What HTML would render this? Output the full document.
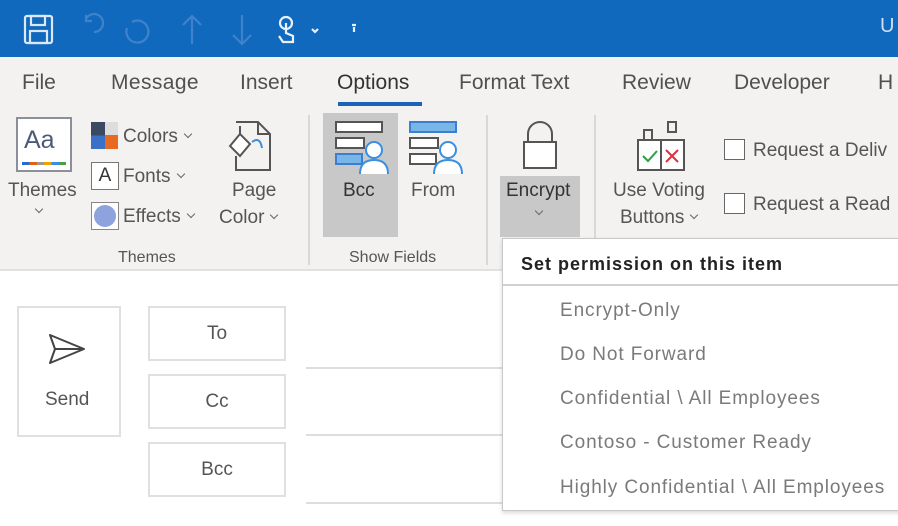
<!DOCTYPE html>
<html><head><meta charset="utf-8"><style>
*{margin:0;padding:0;box-sizing:border-box}
body{width:898px;height:526px;overflow:hidden;background:#fff;font-family:"Liberation Sans",sans-serif;position:relative;color:#444}
.a{position:absolute;white-space:nowrap}
.top{left:0;top:0;width:898px;height:57px;background:#1169bd}
.rib{left:0;top:57px;width:898px;height:214px;background:#f3f2f1;border-bottom:2px solid #e1e1e1}
.tab{font-size:21px;color:#505050;top:71px}
.lbl{font-size:19px;color:#555}
.grp{font-size:16px;color:#555;top:249px}
.sep{width:2px;background:#d8d8d8;top:115px;height:150px}
.box{border:2px solid #e0e0e0;background:#fff;font-size:19px;color:#555;text-align:center}
.item{font-size:19px;color:#7a7a7a;left:560px;letter-spacing:0.9px}
.line{height:2px;background:#ddd;left:306px;width:196px}
.cb{width:21px;height:21px;border:1.5px solid #666;background:#fff}
.ch{display:inline-block;width:6px;height:6px;border-right:1.5px solid #666;border-bottom:1.5px solid #666;transform:rotate(45deg);margin-left:7px;vertical-align:5px}
</style></head><body>
<div class="a top"></div>
<svg class="a" style="left:22px;top:12px" width="340" height="34" viewBox="0 0 340 34" fill="none" stroke-width="2.2">
 <g stroke="#dce8f5"><rect x="3" y="4" width="27" height="27" rx="2"/><rect x="9" y="4" width="14" height="9"/><rect x="8" y="19" width="17" height="12"/></g>
 <g stroke="#3f82cc"><path d="M72 20a9 9 0 1 0-8-13M64 3v6h6"/><path d="M110 10a11 11 0 1 1-5 6"/><path d="M170 32V5M161 13l9-9 9 9"/><path d="M220 3v28M211 23l9 9 9-9"/></g>
 <g stroke="#e8f0fa"><circle cx="264" cy="11" r="6"/><path d="M264 11v10l7 3v6h-10l-4-6"/><path d="M290 17l3 3 3-3"/><path d="M330 13h4M332 15v5"/></g>
</svg>
<div class="a" style="left:880px;top:15px;font-size:20px;color:#cfe0f2">U</div>
<div class="a rib"></div>
<div class="a tab" style="left:22px">File</div>
<div class="a tab" style="left:111px;letter-spacing:0.4px">Message</div>
<div class="a tab" style="left:240px">Insert</div>
<div class="a tab" style="left:337px;color:#333">Options</div>
<div class="a" style="left:338px;top:102px;width:84px;height:4px;background:#1a63b8"></div>
<div class="a tab" style="left:459px">Format Text</div>
<div class="a tab" style="left:622px">Review</div>
<div class="a tab" style="left:734px">Developer</div>
<div class="a tab" style="left:878px">H</div>

<!-- Themes -->
<div class="a" style="left:16px;top:117px;width:56px;height:55px;border:2px solid #8a8f99;background:#fff"></div>
<div class="a" style="left:24px;top:126px;font-size:25px;color:#4c5a75">Aa</div>
<div class="a" style="left:22px;top:162px;width:44px;height:3px;background:linear-gradient(90deg,#2a6ad0 0 17%,#e06020 17% 34%,#999 34% 50%,#f0a000 50% 67%,#3a90e0 67% 84%,#4aa040 84%)"></div>
<div class="a lbl" style="left:8px;top:180px">Themes</div>
<div class="a" style="left:36px;top:204px"><span class="ch" style="margin:0"></span></div>
<div class="a" style="left:91px;top:122px;width:27px;height:27px;background:linear-gradient(#3b4a60 0 50%,#3a70c8 50%);"></div>
<div class="a" style="left:105px;top:122px;width:13px;height:13px;background:#ddd"></div>
<div class="a" style="left:105px;top:135px;width:13px;height:14px;background:#e86a20"></div>
<div class="a lbl" style="left:123px;top:126px">Colors<span class="ch"></span></div>
<div class="a" style="left:91px;top:162px;width:28px;height:28px;border:1.5px solid #777;background:#fff;font-size:19px;text-align:center;color:#333;line-height:25px">A</div>
<div class="a lbl" style="left:123px;top:166px">Fonts<span class="ch"></span></div>
<div class="a" style="left:91px;top:202px;width:28px;height:28px;border:1.5px solid #888;background:#fff"></div>
<div class="a" style="left:94px;top:205px;width:22px;height:22px;border-radius:50%;background:#8ea2de"></div>
<div class="a lbl" style="left:123px;top:206px">Effects<span class="ch"></span></div>
<svg class="a" style="left:228px;top:120px" width="48" height="52" viewBox="0 0 48 52" fill="none" stroke="#555" stroke-width="2"><path d="M8 2h22l12 12v36H8V36"/><path d="M30 2v12h12"/><path d="M2 26l10-12 10 10-10 12z" fill="#fff"/><path d="M12 14V6" /><path d="M24 22q8-6 10 6" stroke="#3a8fe0"/></svg>
<div class="a lbl" style="left:232px;top:180px">Page</div>
<div class="a lbl" style="left:219px;top:207px">Color<span class="ch"></span></div>
<div class="a grp" style="left:118px">Themes</div>
<div class="a sep" style="left:308px"></div>

<!-- Show Fields -->
<div class="a" style="left:323px;top:113px;width:75px;height:124px;background:#c8c8c8"></div>
<svg class="a" style="left:334px;top:120px" width="58" height="56" viewBox="0 0 58 56" fill="none" stroke-width="2"><rect x="2" y="2" width="46" height="10" fill="#fff" stroke="#555"/><rect x="2" y="18" width="28" height="10" fill="#fff" stroke="#555"/><rect x="2" y="34" width="26" height="10" fill="#7ab5e8" stroke="#3a7fd0"/><circle cx="40" cy="30" r="8" fill="#fff" stroke="#3a8fe0"/><path d="M26 54q0-14 14-14t14 14" fill="#fff" stroke="#3a8fe0"/></svg>
<div class="a lbl" style="left:343px;top:180px;color:#333">Bcc</div>
<svg class="a" style="left:408px;top:120px" width="58" height="56" viewBox="0 0 58 56" fill="none" stroke-width="2"><rect x="2" y="2" width="46" height="10" fill="#7ab5e8" stroke="#3a7fd0"/><rect x="2" y="18" width="28" height="10" fill="#fff" stroke="#555"/><rect x="2" y="34" width="26" height="10" fill="#fff" stroke="#555"/><circle cx="40" cy="30" r="8" fill="#fff" stroke="#3a8fe0"/><path d="M26 54q0-14 14-14t14 14" fill="#fff" stroke="#3a8fe0"/></svg>
<div class="a lbl" style="left:411px;top:180px">From</div>
<div class="a grp" style="left:349px">Show Fields</div>
<div class="a sep" style="left:486px"></div>

<!-- Encrypt -->
<svg class="a" style="left:520px;top:120px" width="40" height="52" viewBox="0 0 40 52" fill="none" stroke="#555" stroke-width="2"><path d="M8 22V14a12 12 0 0 1 24 0v8"/><rect x="4" y="22" width="32" height="26" fill="#fff"/></svg>
<div class="a" style="left:500px;top:176px;width:80px;height:61px;background:#c8c8c8"></div>
<div class="a lbl" style="left:506px;top:180px;color:#333">Encrypt</div>
<div class="a" style="left:536px;top:206px"><span class="ch" style="margin:0"></span></div>
<div class="a sep" style="left:594px"></div>

<!-- Voting -->
<svg class="a" style="left:636px;top:120px" width="52" height="52" viewBox="0 0 52 52" fill="none" stroke="#555" stroke-width="2"><rect x="8" y="10" width="8" height="10"/><rect x="32" y="2" width="8" height="10"/><rect x="2" y="20" width="46" height="30" fill="#fff"/><path d="M25 20v30"/><path d="M7 36l5 5 9-10" stroke="#2aa040"/><path d="M30 30l12 12M42 30L30 42" stroke="#e03040"/></svg>
<div class="a lbl" style="left:613px;top:180px">Use Voting</div>
<div class="a lbl" style="left:620px;top:207px">Buttons<span class="ch"></span></div>
<div class="a cb" style="left:724px;top:139px"></div>
<div class="a lbl" style="left:753px;top:140px">Request a Deliv</div>
<div class="a cb" style="left:724px;top:193px"></div>
<div class="a lbl" style="left:753px;top:194px">Request a Read</div>

<!-- compose -->
<div class="a box" style="left:17px;top:306px;width:104px;height:131px"></div>
<svg class="a" style="left:47px;top:332px" width="40" height="34" viewBox="0 0 40 34" fill="none" stroke="#444" stroke-width="2" stroke-linejoin="round"><path d="M3 3l34 14L3 31l5-14z"/><path d="M8 17h29"/></svg>
<div class="a" style="left:45px;top:389px;font-size:19px;color:#555">Send</div>
<div class="a box" style="left:148px;top:306px;width:138px;height:55px;line-height:51px">To</div>
<div class="a box" style="left:148px;top:374px;width:138px;height:55px;line-height:51px">Cc</div>
<div class="a box" style="left:148px;top:442px;width:138px;height:55px;line-height:51px">Bcc</div>
<div class="a line" style="top:367px"></div>
<div class="a line" style="top:434px"></div>
<div class="a line" style="top:502px"></div>

<!-- dropdown -->
<div class="a" style="left:502px;top:238px;width:400px;height:273px;background:#fff;border:1.5px solid #c8c8c8;box-shadow:0 2px 4px rgba(0,0,0,.15)"></div>
<div class="a" style="left:503px;top:284px;width:398px;height:2px;background:#d0d0d0"></div>
<div class="a" style="left:521px;top:254px;font-size:18px;font-weight:bold;color:#222;letter-spacing:1px">Set permission on this item</div>
<div class="a item" style="top:300px">Encrypt-Only</div>
<div class="a item" style="top:344px">Do Not Forward</div>
<div class="a item" style="top:388px">Confidential \ All Employees</div>
<div class="a item" style="top:432px">Contoso - Customer Ready</div>
<div class="a item" style="top:477px">Highly Confidential \ All Employees</div>
</body></html>
